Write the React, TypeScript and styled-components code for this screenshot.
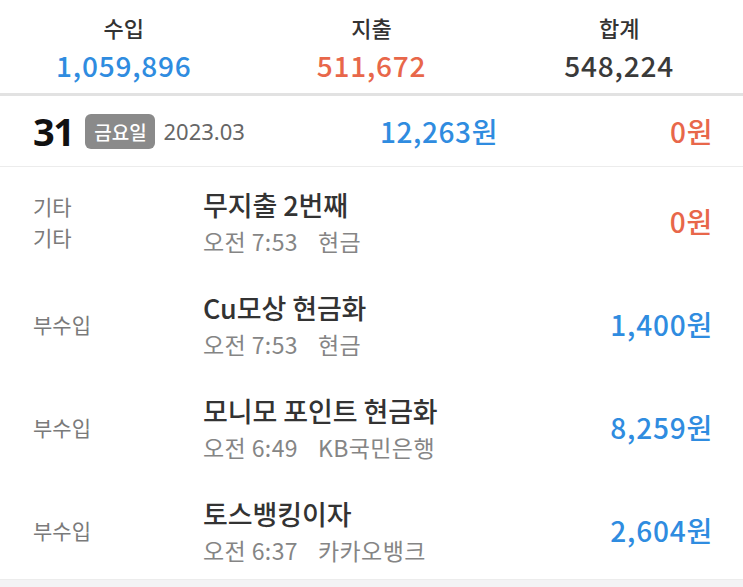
import React from "react";
import styled, { createGlobalStyle } from "styled-components";

const BLUE = "#2f8ce0";
const RED = "#e8674a";

type Item = {
  category: string;
  subCategory?: string;
  title: string;
  time: string;
  account: string;
  amount: string;
  type: "income" | "expense";
};

const items: Item[] = [
  { category: "기타", subCategory: "기타", title: "무지출 2번째", time: "오전 7:53", account: "현금", amount: "0원", type: "expense" },
  { category: "부수입", title: "Cu모상 현금화", time: "오전 7:53", account: "현금", amount: "1,400원", type: "income" },
  { category: "부수입", title: "모니모 포인트 현금화", time: "오전 6:49", account: "KB국민은행", amount: "8,259원", type: "income" },
  { category: "부수입", title: "토스뱅킹이자", time: "오전 6:37", account: "카카오뱅크", amount: "2,604원", type: "income" },
];

const App = () => {
  return (
    <>
      <GlobalStyle />
      <Page>
        <Summary>
          <SummaryCol>
            <SummaryLabel>수입</SummaryLabel>
            <SummaryValue $color={BLUE}>1,059,896</SummaryValue>
          </SummaryCol>
          <SummaryCol>
            <SummaryLabel>지출</SummaryLabel>
            <SummaryValue $color={RED}>511,672</SummaryValue>
          </SummaryCol>
          <SummaryCol>
            <SummaryLabel>합계</SummaryLabel>
            <SummaryValue $color="#3a3a3a">548,224</SummaryValue>
          </SummaryCol>
        </Summary>

        <DayRow>
          <DayInfo>
            <DayNumber>31</DayNumber>
            <WeekdayBadge>금요일</WeekdayBadge>
            <DayMonth>2023.03</DayMonth>
          </DayInfo>
          <DayAmount $color={BLUE}>12,263원</DayAmount>
          <DayAmount $color={RED}>0원</DayAmount>
        </DayRow>

        <List>
          {items.map((item, i) => (
            <Row key={i}>
              <Category>
                <span>{item.category}</span>
                {item.subCategory && <span>{item.subCategory}</span>}
              </Category>
              <Detail>
                <Title>{item.title}</Title>
                <Meta>
                  <span>{item.time}</span>
                  <span>{item.account}</span>
                </Meta>
              </Detail>
              <Amount $color={item.type === "income" ? BLUE : RED}>{item.amount}</Amount>
            </Row>
          ))}
        </List>
        <Footer />
      </Page>
    </>
  );
};

export default App;

const GlobalStyle = createGlobalStyle`
  html, body {
    margin: 0;
    padding: 0;
    background: #ffffff;
  }
  body {
    font-family: "Noto Sans CJK KR", "Noto Sans", sans-serif;
  }
`;

const Page = styled.div`
  width: 743px;
  height: 587px;
  overflow: hidden;
  display: flex;
  flex-direction: column;
  background: #fff;
`;

const Summary = styled.div`
  display: grid;
  grid-template-columns: repeat(3, 1fr);
  height: 93px;
  border-bottom: 3px solid #e2e2e2;
  box-sizing: content-box;
`;

const SummaryCol = styled.div`
  display: flex;
  flex-direction: column;
  align-items: center;
  padding-top: 10px;
`;

const SummaryLabel = styled.div`
  font-size: 22px;
  line-height: 34px;
  color: #333;
  font-weight: 500;
`;

const SummaryValue = styled.div<{ $color: string }>`
  font-size: 28px;
  line-height: 42px;
  letter-spacing: 0.8px;
  color: ${(p) => p.$color};
  font-weight: 500;
`;

const DayRow = styled.div`
  display: grid;
  grid-template-columns: 1fr 200px 215px;
  align-items: center;
  height: 70px;
  padding: 0 30px 0 33px;
  border-bottom: 1px solid #ececec;
`;

const DayInfo = styled.div`
  display: flex;
  align-items: center;
`;

const DayNumber = styled.span`
  font-family: "Noto Sans", sans-serif;
  font-size: 38px;
  font-weight: 700;
  letter-spacing: -1.5px;
  color: #111;
  margin-right: 12px;
`;

const WeekdayBadge = styled.span`
  display: inline-flex;
  align-items: center;
  justify-content: center;
  width: 70px;
  height: 35px;
  border-radius: 6px;
  background: #8a8a8a;
  color: #fff;
  font-size: 19px;
  font-weight: 500;
  margin-right: 8px;
`;

const DayMonth = styled.span`
  font-family: "Noto Sans", sans-serif;
  font-size: 22px;
  color: #666;
`;

const DayAmount = styled.span<{ $color: string }>`
  text-align: right;
  font-size: 28px;
  font-weight: 500;
  letter-spacing: 0.6px;
  color: ${(p) => p.$color};
`;

const List = styled.div`
  display: flex;
  flex-direction: column;
`;

const Row = styled.div`
  display: grid;
  grid-template-columns: 170px 1fr auto;
  align-items: center;
  height: 103px;
  padding: 0 30px 0 33px;
`;

const Category = styled.div`
  display: flex;
  flex-direction: column;
  font-size: 21px;
  line-height: 31px;
  color: #7a7a7a;
  padding-top: 6px;
`;

const Detail = styled.div`
  display: flex;
  flex-direction: column;
  padding-top: 8px;
`;

const Title = styled.div`
  font-size: 27px;
  line-height: 37px;
  font-weight: 500;
  letter-spacing: -0.1px;
  color: #333;
`;

const Meta = styled.div`
  display: flex;
  gap: 20px;
  font-size: 23px;
  line-height: 37px;
  letter-spacing: 0.4px;
  color: #858585;
`;

const Amount = styled.div<{ $color: string }>`
  font-size: 28px;
  font-weight: 500;
  letter-spacing: 0.8px;
  color: ${(p) => p.$color};
  padding-top: 5px;
`;

const Footer = styled.div`
  flex: 1;
  background: #f3f3f5;
  border-top: 1px solid #ececec;
`;
